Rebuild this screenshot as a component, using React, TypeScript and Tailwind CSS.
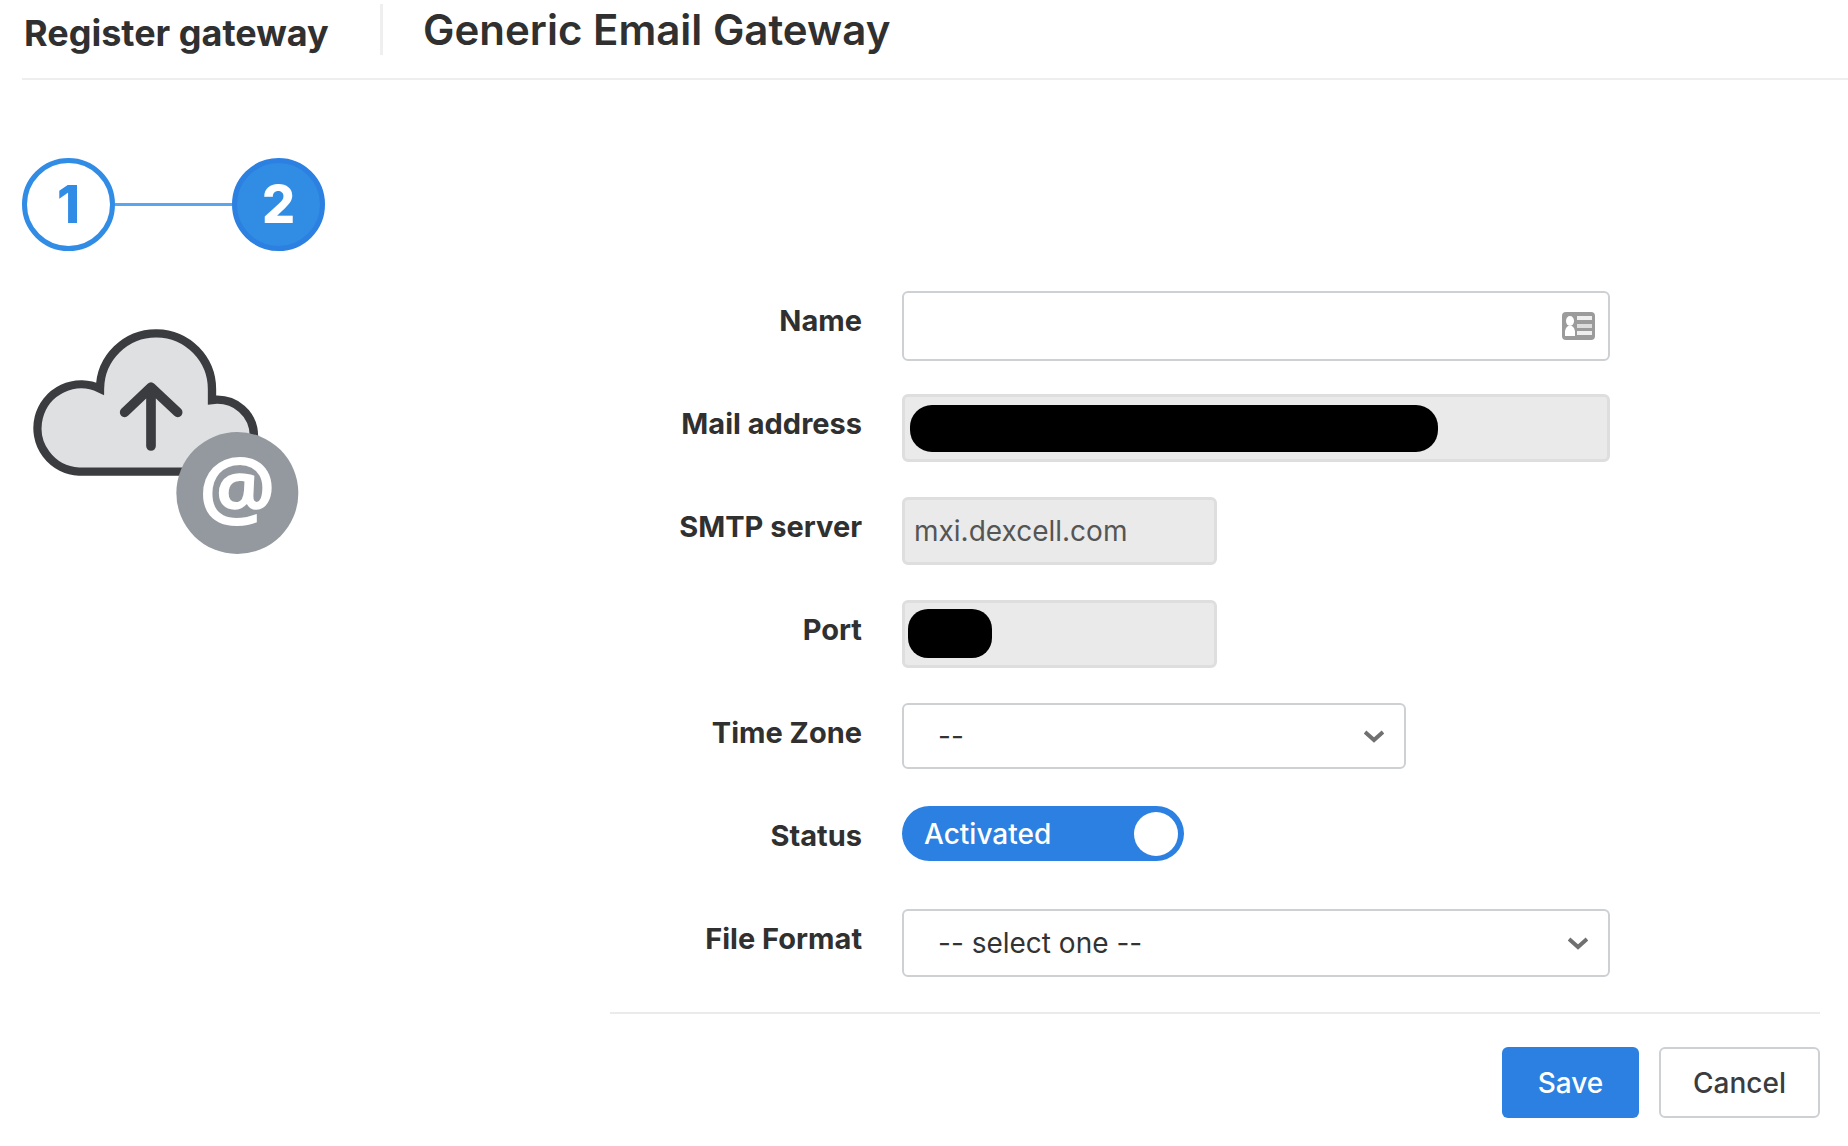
import { useState, type ReactNode } from "react";

const CONTROL = "rounded-md border-2 border-[#cdd1d4] bg-white text-[28px] text-[#333333]";
const READONLY = "h-[68px] rounded-md border-[3px] border-[#dedede] bg-[#eaeaea] px-[9px] text-[28px] text-[#555555]";

function CloudUploadIcon() {
  return (
    <svg viewBox="60 51 810 690" className="h-[230px] w-[270px]" aria-hidden="true">
      <path
        d="M207 485 A131 131 0 1 1 270 236 A168 168 0 0 1 606 240 V270 C676 262 732 312 732 380 C732 440 690 485 625 485 Z"
        fill="#dfe0e2"
        stroke="#3a3c3f"
        strokeWidth="25"
      />
      <path
        d="M423 408 V232 M344 307 L423 232 L503 307"
        fill="none"
        stroke="#3a3c3f"
        strokeWidth="29"
        strokeLinecap="round"
        strokeLinejoin="round"
      />
      <circle cx="682" cy="549" r="183" fill="#9499a0" />
      <text
        x="682"
        y="628"
        textAnchor="middle"
        fontSize="258"
        fontWeight="700"
        fill="#ffffff"
        fontFamily="'Open Sans', 'Noto Sans', sans-serif"
      >
        @
      </text>
    </svg>
  );
}

function ContactCardIcon() {
  return (
    <svg viewBox="0 0 33 28" className="h-7 w-[33px]" aria-hidden="true">
      <rect width="33" height="28" rx="4" fill="#9b9b9b" />
      <rect x="15" y="4" width="15" height="4" fill="#eeeeee" />
      <rect x="15" y="12" width="15" height="4" fill="#dddddd" />
      <rect x="15" y="19" width="15" height="4" fill="#eeeeee" />
      <ellipse cx="8" cy="9" rx="4" ry="5" fill="#ffffff" />
      <path d="M3 24 V19 Q3 16 6 14 H10 Q13 16 13 19 V24 Z" fill="#ffffff" />
    </svg>
  );
}

function Chevron() {
  return (
    <svg
      viewBox="0 0 20 14"
      className="pointer-events-none absolute top-1/2 right-[22px] h-[14px] w-5 -translate-y-1/2"
      aria-hidden="true"
    >
      <path d="M1 3 L10 11 L19 3" fill="none" stroke="#707070" strokeWidth="4" />
    </svg>
  );
}

function FormRow({ id, label, children }: { id: string; label: string; children: ReactNode }) {
  return (
    <div className="flex min-h-[103px] items-start gap-10">
      <label htmlFor={id} className="w-[252px] shrink-0 text-right text-[29px] leading-[60px] font-bold">
        {label}
      </label>
      <div className="min-w-0 flex-1">{children}</div>
    </div>
  );
}

export default function App() {
  const [name, setName] = useState("");
  const [active, setActive] = useState(true);

  return (
    <div className="min-h-screen bg-white pl-[22px] font-['Inter','Liberation_Sans',sans-serif] text-[#303030]">
      <header className="flex h-20 items-start border-b-2 border-[#eeeeee] pt-1">
        <h2 className="w-[358px] pl-[2px] text-[36px] leading-[58px] font-bold whitespace-nowrap">
          Register gateway
        </h2>
        <div className="h-[51px] w-[3px] bg-[#efefef]" />
        <h1 className="pl-10 text-[42px] leading-[52px] font-semibold whitespace-nowrap">Generic Email Gateway</h1>
      </header>

      <main className="grid grid-cols-[588px_1fr] pt-[78px] pr-7">
        <aside>
          {/* Steps */}
          <ol className="flex items-center text-[52px] font-extrabold">
            <li className="flex size-[93px] items-center justify-center rounded-full border-[5px] border-[#318ce6] text-[#318ce6]">
              1
            </li>
            <li aria-hidden="true" className="h-[3px] w-[117px] bg-[#5ba5ec]" />
            <li className="flex size-[93px] items-center justify-center rounded-full border-[5px] border-[#2b80e1] bg-[#318ce3] text-white">
              2
            </li>
          </ol>
          <div className="pt-[76px] pl-2">
            <CloudUploadIcon />
          </div>
        </aside>

        <form onSubmit={(e) => e.preventDefault()} className="pt-[133px]">
          <FormRow id="name" label="Name">
            <div className="relative w-[708px] max-w-full">
              <input
                id="name"
                type="text"
                value={name}
                onChange={(e) => setName(e.target.value)}
                className={`${CONTROL} block h-[70px] w-full pr-16 pl-[10px]`}
              />
              <span className="absolute top-[21px] right-[15px]">
                <ContactCardIcon />
              </span>
            </div>
          </FormRow>

          <FormRow id="mail" label="Mail address">
            <div className="relative w-[708px] max-w-full">
              <input id="mail" type="text" readOnly className={`${READONLY} block w-full`} />
              <span className="absolute top-[11px] left-2 h-[47px] w-[528px] rounded-[22px] bg-black" />
            </div>
          </FormRow>

          <FormRow id="smtp" label="SMTP server">
            <input id="smtp" type="text" readOnly value="mxi.dexcell.com" className={`${READONLY} block w-[315px]`} />
          </FormRow>

          <FormRow id="port" label="Port">
            <div className="relative w-[315px]">
              <input id="port" type="text" readOnly className={`${READONLY} block w-full`} />
              <span className="absolute top-[9px] left-[6px] h-[49px] w-[84px] rounded-[20px] bg-black" />
            </div>
          </FormRow>

          <FormRow id="timezone" label="Time Zone">
            <div className="relative w-[504px] max-w-full">
              <select id="timezone" className={`${CONTROL} block h-[66px] w-full appearance-none px-[34px]`}>
                <option>--</option>
              </select>
              <Chevron />
            </div>
          </FormRow>

          <FormRow id="status" label="Status">
            <button
              id="status"
              type="button"
              role="switch"
              aria-checked={active}
              onClick={() => setActive(!active)}
              className="flex h-[55px] w-[282px] items-center justify-between rounded-full bg-[#2b80e1] pr-[6px] pl-[22px] text-[28px] font-medium text-white"
            >
              {active ? "Activated" : "Deactivated"}
              <span className="size-11 rounded-full bg-white" />
            </button>
          </FormRow>

          <FormRow id="format" label="File Format">
            <div className="relative w-[708px] max-w-full">
              <select id="format" className={`${CONTROL} block h-[68px] w-full appearance-none px-[34px]`}>
                <option>-- select one --</option>
              </select>
              <Chevron />
            </div>
          </FormRow>

          {/* Actions */}
          <div className="flex justify-end gap-5 border-t-2 border-[#ebebeb] pt-[33px]">
            <button type="submit" className="h-[71px] w-[137px] rounded-md bg-[#2b80e1] text-[28px] font-medium text-white">
              Save
            </button>
            <button
              type="button"
              className="h-[71px] w-[161px] rounded-md border-2 border-[#cdd1d4] bg-white text-[28px] font-medium text-[#3a3c40]"
            >
              Cancel
            </button>
          </div>
        </form>
      </main>
    </div>
  );
}
